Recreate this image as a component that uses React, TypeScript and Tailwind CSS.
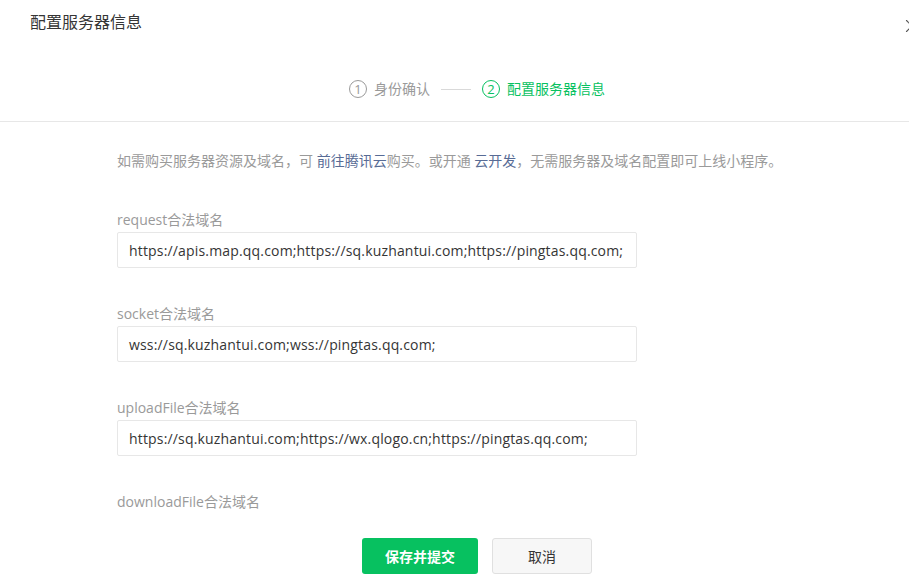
import { X } from "lucide-react";

const FONT = "font-['Open_Sans','Noto_Sans_CJK_SC',sans-serif]";

const fields = [
  { label: "request合法域名", value: "https://apis.map.qq.com;https://sq.kuzhantui.com;https://pingtas.qq.com;" },
  { label: "socket合法域名", value: "wss://sq.kuzhantui.com;wss://pingtas.qq.com;" },
  { label: "uploadFile合法域名", value: "https://sq.kuzhantui.com;https://wx.qlogo.cn;https://pingtas.qq.com;" },
  { label: "downloadFile合法域名", value: "https://sq.kuzhantui.com;https://wx.qlogo.cn;https://pingtas.qq.com;" },
];

function StepNum({ n, active }: { n: number; active?: boolean }) {
  return (
    <span
      className={`inline-flex h-[18px] w-[18px] items-center justify-center rounded-full border text-[13px] leading-none ${
        active ? "border-[#07c160] text-[#07c160]" : "border-[#9a9a9a] text-[#9a9a9a]"
      }`}
    >
      {n}
    </span>
  );
}

export default function App() {
  return (
    <div className={`h-[588px] w-full overflow-hidden bg-white ${FONT}`}>
      <div className="relative w-[954px]">
        {/* header */}
        <div className="border-b border-[#e7e7e7] pb-[20px] pt-[12px]">
          <h1 className="px-[30px] text-[16px] font-normal leading-[20px] text-[#353535]">配置服务器信息</h1>
          <button type="button" className="absolute left-[901px] top-[15px] text-[#555]">
            <X className="h-[22px] w-[22px]" strokeWidth={1.2} />
          </button>
          <div className="mt-[45px] flex h-[24px] items-center justify-center text-[14px] leading-[24px]">
            <div className="flex items-center gap-[7px] text-[#9a9a9a]">
              <StepNum n={1} />
              <span>身份确认</span>
            </div>
            <div className="mx-[11px] h-px w-[30px] bg-[#d9d9d9]" />
            <div className="flex items-center gap-[7px] text-[#07c160]">
              <StepNum n={2} active />
              <span>配置服务器信息</span>
            </div>
          </div>
        </div>

        {/* body */}
        <div className="h-[392px] overflow-hidden px-[117px] pt-[29px]">
          <p className="text-[14px] leading-[20px] text-[#9a9a9a]">
            如需购买服务器资源及域名，可 <a className="text-[#576b95]">前往腾讯云</a>购买。或开通{" "}
            <a className="text-[#576b95]">云开发</a>，无需服务器及域名配置即可上线小程序。
          </p>
          <div className="mt-[39px]">
            {fields.map((f) => (
              <div key={f.label} className="mb-[36px]">
                <div className="mb-[2px] text-[14px] leading-[20px] text-[#9a9a9a]">{f.label}</div>
                <div className="flex h-[36px] w-[520px] items-center rounded-[2px] border border-[#e7e7e7] px-[11px] text-[14px] tracking-[0.17px] text-[#353535]">
                  {f.value}
                </div>
              </div>
            ))}
          </div>
        </div>

        {/* footer */}
        <div className="flex justify-center gap-[14px] pt-[24px]">
          <button
            type="button"
            className="h-[36px] w-[116px] rounded-[3px] bg-[#07c160] text-[14px] font-semibold text-white"
          >
            保存并提交
          </button>
          <button
            type="button"
            className="h-[36px] w-[100px] rounded-[3px] border border-[#e0e0e0] bg-[#f7f7f7] text-[14px] text-[#353535]"
          >
            取消
          </button>
        </div>
      </div>
    </div>
  );
}
